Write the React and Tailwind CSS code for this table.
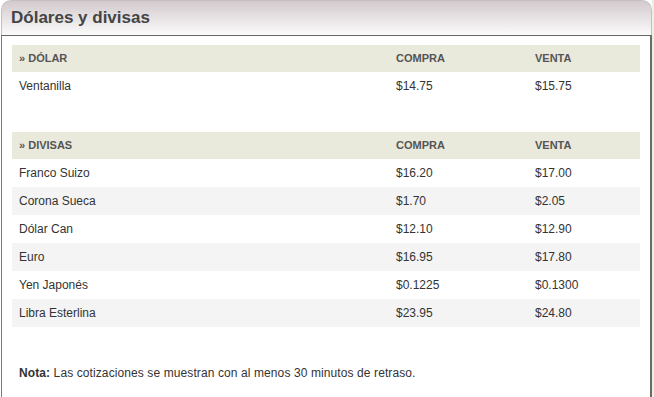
import React from "react";

const divisas = [
  ["Franco Suizo", "$16.20", "$17.00"],
  ["Corona Sueca", "$1.70", "$2.05"],
  ["Dólar Can", "$12.10", "$12.90"],
  ["Euro", "$16.95", "$17.80"],
  ["Yen Japonés", "$0.1225", "$0.1300"],
  ["Libra Esterlina", "$23.95", "$24.80"],
];

function HeadRow({ label }) {
  return (
    <div className="flex h-[27px] items-center bg-[#e9e9dc] text-[11px] font-bold text-[#555] uppercase">
      <div className="w-[377px] pl-[7px]">» {label}</div>
      <div className="w-[139px] pl-[7px]">COMPRA</div>
      <div className="flex-1 pl-[7px]">VENTA</div>
    </div>
  );
}

function Row({ cells, alt }) {
  return (
    <div className={`flex h-[28px] items-center text-[12px] text-[#333] ${alt ? "bg-[#f4f4f4]" : "bg-white"}`}>
      <div className="w-[377px] pl-[7px]">{cells[0]}</div>
      <div className="w-[139px] pl-[7px]">{cells[1]}</div>
      <div className="flex-1 pl-[7px]">{cells[2]}</div>
    </div>
  );
}

export default function App() {
  return (
    <div className="flex h-[397px] w-[654px] bg-white" style={{ fontFamily: '"Liberation Sans", Arial, sans-serif' }}>
      <div className="ml-[1px] flex w-[651px] flex-col">
        <div className="flex h-[35px] items-center rounded-t-[10px] border border-b-0 border-[#c4c0c2] bg-gradient-to-b from-[#d3cacd] to-[#fbfbfb] pl-[9px]">
          <h1 className="text-[17px] font-bold text-[#444]">Dólares y divisas</h1>
        </div>
        <div className="flex flex-1 flex-col border-t border-l border-r-2 border-t-[#666] border-l-[#7a7a7a] border-r-[#6b6b60] pl-[10px] pr-[10px] pt-[9px]">
          <HeadRow label="DÓLAR" />
          <Row cells={["Ventanilla", "$14.75", "$15.75"]} alt={false} />
          <div className="h-[32px]" />
          <HeadRow label="DIVISAS" />
          {divisas.map((d, i) => (
            <Row key={d[0]} cells={d} alt={i % 2 === 1} />
          ))}
          <p className="mt-[37px] pl-[7px] text-[12px] tracking-[0.1px] text-[#333]">
            <span className="font-bold">Nota:</span> Las cotizaciones se muestran con al menos 30 minutos de retraso.
          </p>
        </div>
      </div>
      <div className="w-[2px] bg-[#eeeee2]" />
    </div>
  );
}
